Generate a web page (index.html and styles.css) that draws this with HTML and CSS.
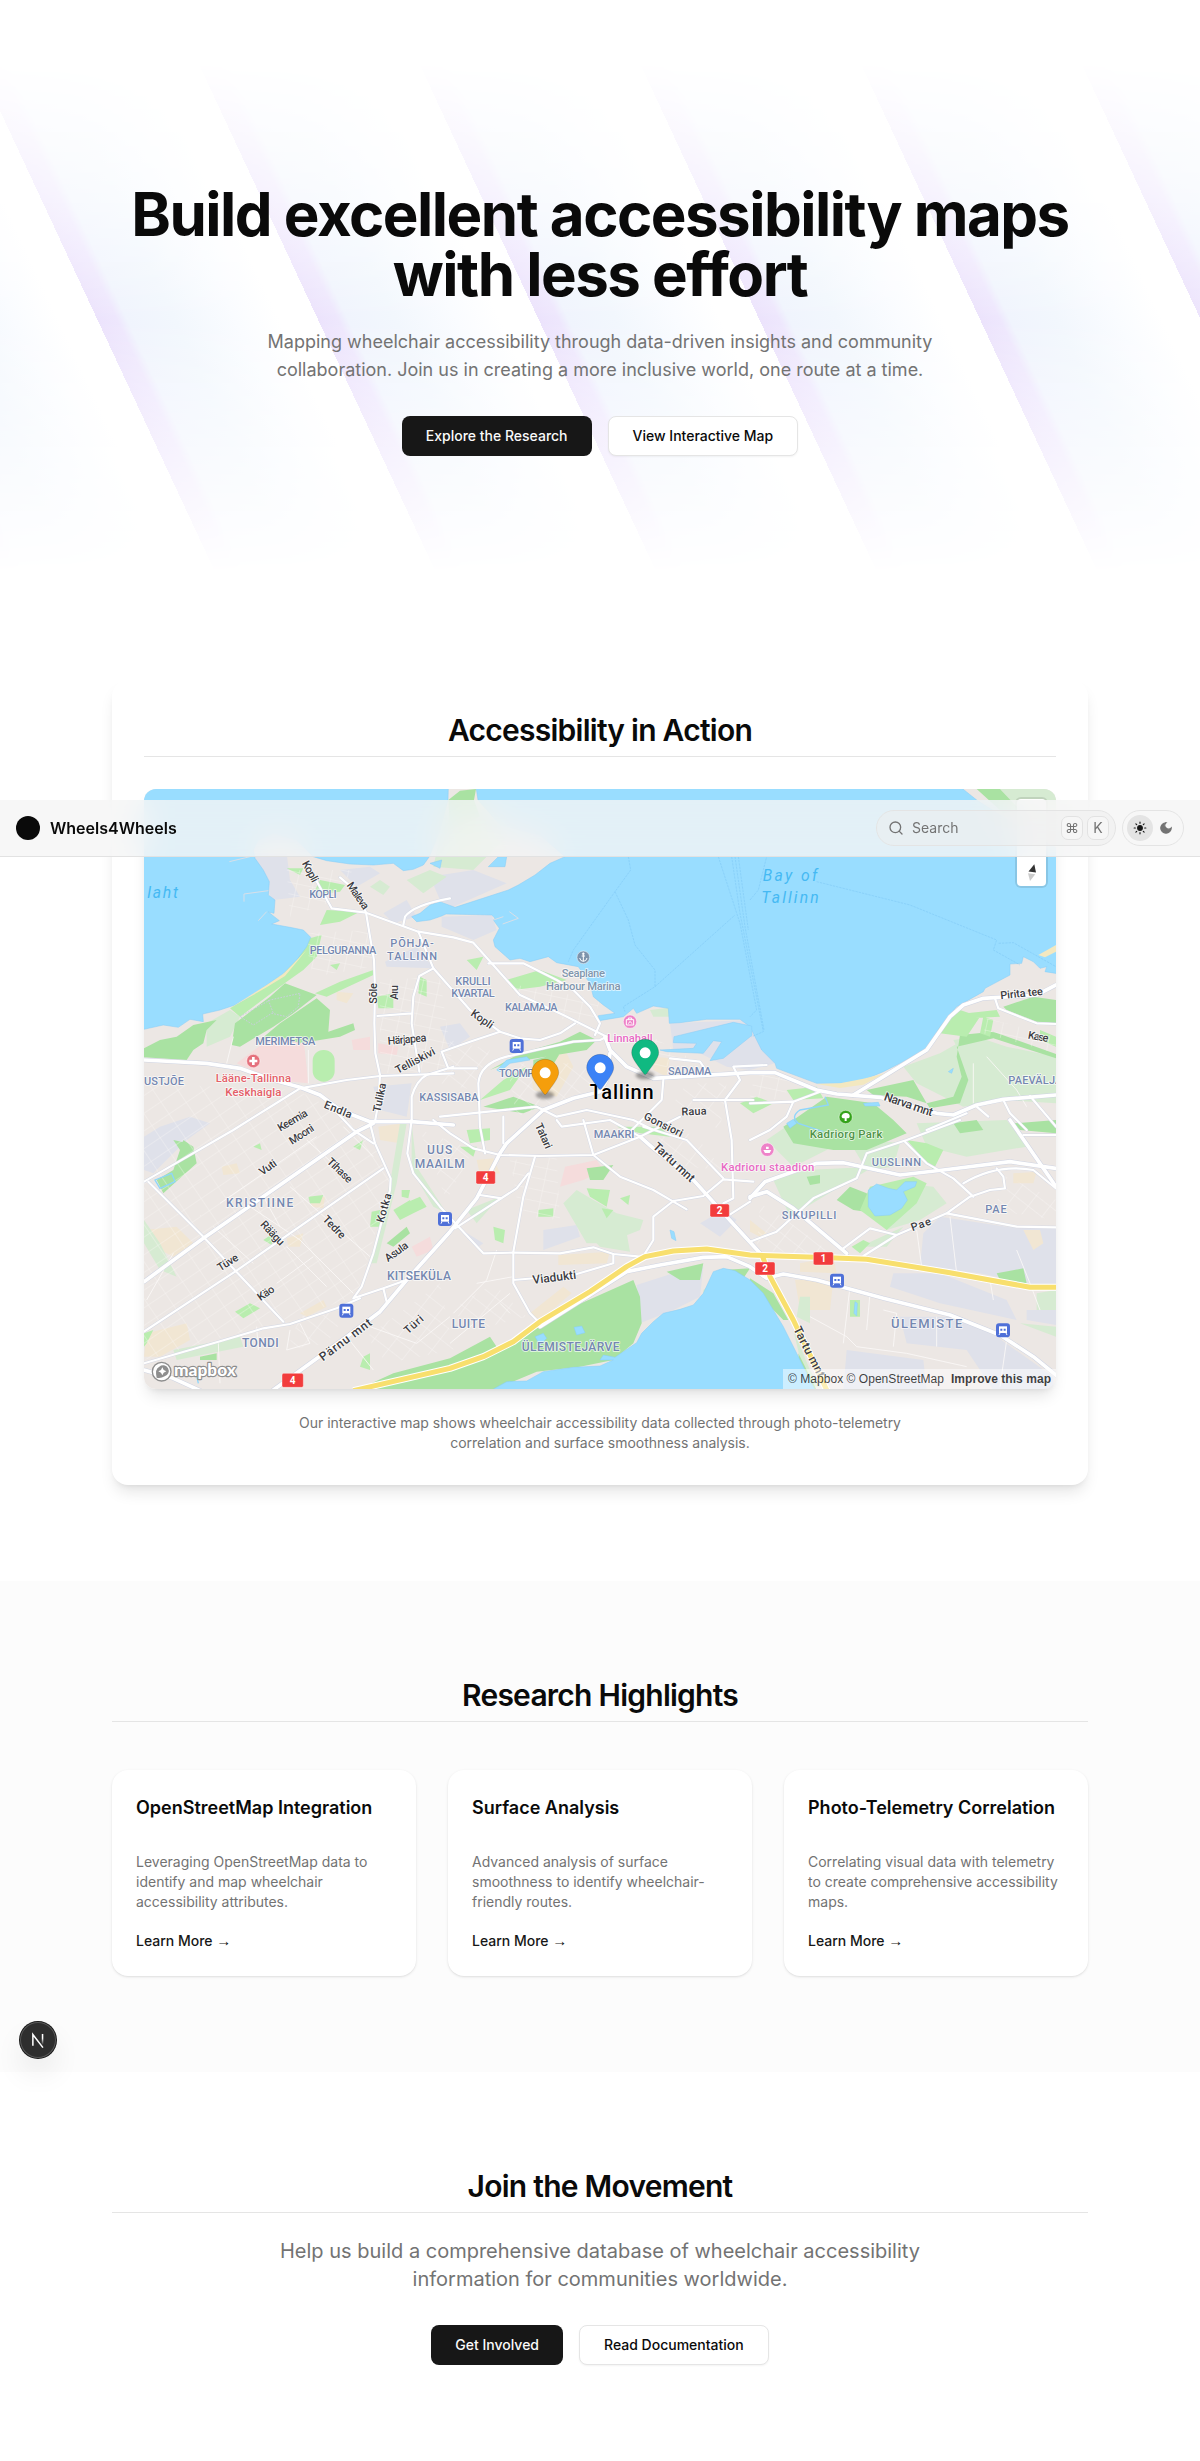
FILE: index.html
```html
<!DOCTYPE html>
<html lang="en">
<head>
<meta charset="utf-8">
<title>Wheels4Wheels</title>
<link rel="stylesheet" href="styles.css">
</head>
<body>
<header class="nav">
  <a class="brand"><span class="brand-dot"></span>Wheels4Wheels</a>
  <div class="nav-tools">
    <div class="search">
      <svg class="search-icon" viewBox="0 0 24 24"><circle cx="11" cy="11" r="8"/><path d="m21 21-4.3-4.3"/></svg>
      <span class="search-label">Search</span>
      <kbd>⌘</kbd><kbd>K</kbd>
    </div>
    <div class="theme">
      <span class="theme-opt active"><svg viewBox="0 0 24 24"><circle cx="12" cy="12" r="4"/><path d="M12 2v2M12 20v2M4.93 4.93l1.41 1.41M17.66 17.66l1.41 1.41M2 12h2M20 12h2M6.34 17.66l-1.41 1.41M19.07 4.93l-1.41 1.41"/></svg></span>
      <span class="theme-opt"><svg viewBox="0 0 24 24"><path d="M12 3a6 6 0 0 0 9 9 9 9 0 1 1-9-9Z"/></svg></span>
    </div>
  </div>
</header>

<main>
<section class="hero">
  <h1>Build excellent accessibility maps<br>with less effort</h1>
  <p class="hero-lead">Mapping wheelchair accessibility through data-driven insights and community collaboration. Join us in creating a more inclusive world, one route at a time.</p>
  <div class="actions">
    <a class="btn btn-dark">Explore the Research</a>
    <a class="btn btn-light">View Interactive Map</a>
  </div>
</section>

<section class="section">
  <div class="map-card">
    <h2>Accessibility in Action</h2>
    <div class="map">
      <svg class="map-art" viewBox="12 -183 2736 1800">
        <defs>
          <pattern id="gridA" width="62" height="44" patternUnits="userSpaceOnUse" patternTransform="rotate(-34)"><path d="M0 0H62M0 0V44"/></pattern>
          <pattern id="gridB" width="48" height="34" patternUnits="userSpaceOnUse" patternTransform="rotate(12)"><path d="M0 0H48M0 0V34"/></pattern>
          <pattern id="gridC" width="52" height="40" patternUnits="userSpaceOnUse" patternTransform="rotate(38)"><path d="M0 0H52M0 0V40"/></pattern>
          <filter id="soft" x="-50%" y="-50%" width="200%" height="200%"><feGaussianBlur stdDeviation="5"/></filter>
          <g id="streets">
            <path d="M500 40 575 175 678 188 690 260 702 330 705 420 703 520 706 610 720 675 715 760 705 815"/>
            <path d="M600 82 650 125 678 188 835 245 940 262 1000 278 1140 435 1270 495 1400 560"/>
            <path d="M930 145Q820 165 795 200L790 225M835 245 880 355 990 480 1080 545 1140 565 1200 570 1260 550 1305 520"/>
            <path d="M880 355 838 378 820 440 815 520 838 665M712 498 815 490"/>
            <path d="M480 715 620 690 720 678 940 670M480 715 400 765 280 840 12 995M560 755 640 840 700 880"/>
            <path d="M815 815 815 740Q830 690 860 675L940 650"/>
            <path d="M25 995 190 1160 430 1415M12 1445 285 1265 730 955"/>
            <path d="M690 820 705 880 752 985 750 1020 700 1210 665 1310 640 1345 730 1315 800 1290M730 1315 740 1355"/>
            <path d="M815 810 802 910 820 970 900 1070 960 1135 1030 1210 1120 1208 1260 1210 1360 1192 1420 1212 1500 1220"/>
            <path d="M12 1540 235 1475 370 1435 450 1422 590 1375 660 1345"/>
            <path d="M880 810 930 850 1000 895 1080 915 1200 918 1360 915 1500 860 1620 800"/>
            <path d="M1045 340 1150 340 1250 390 1300 420 1350 470 1380 520 1365 555"/>
            <path d="M1035 910 1020 830 1015 700Q1020 640 1100 620L1300 575 1380 570 1400 560"/>
            <path d="M905 605 990 575 1080 545M905 605 925 655 1010 655M900 800 1190 770 1250 800 1340 780 1480 810 1540 840"/>
            <path d="M1570 690 1565 750 1475 840M1660 750 1840 750M1755 750 1800 690 1780 650 1880 645M1590 625 1680 635 1700 665M1755 750 1775 870 1780 1045 1750 1060"/>
            <path d="M1185 920 1150 1040 1120 1205 1120 1300 1170 1390 1190 1410M1120 1290 1300 1275 1420 1240 1420 1212"/>
            <path d="M1360 915 1440 980 1540 1020 1600 1055 1640 1078M1600 1053 1690 1038 1750 988 1840 995M1600 1053 1540 1100 1540 1170 1515 1210"/>
            <path d="M945 1135 1130 1015 1165 970M1020 1035 1085 1045M1410 810 1500 860M1330 810 1360 915M1250 810 1265 830 1410 810M1090 800 1090 880M1510 830 1640 870 1750 985M1760 1100 1830 1055"/>
            <path d="M1830 1175 1910 1145 2020 1045 2150 985 2180 910 2300 870 2460 810"/>
            <path d="M2110 1195 2190 1135 2270 1155M2170 1218 2270 1155 2420 1090 2490 1040 2550 1020 2595 1015 2590 980 2570 955M2420 1090 2630 1130 2748 1132M2295 875 2360 940 2440 985 2500 1040M2470 1000Q2570 940 2680 960L2748 1015M2650 855H2748"/>
            <path d="M2565 445 2575 475 2690 520 2748 522M2590 750 2610 790 2660 840M2670 738 2748 830M2510 770 2545 800M1830 760 1960 755 2040 725M1960 755 1940 800 1890 840 1830 870M2360 840 2480 790"/>
          </g>
          <g id="arterials">
            <path d="M12 630 200 640 300 655 400 690 480 712 540 735 600 780 690 815 815 815 940 825"/>
            <path d="M12 1295 190 1165 650 845 700 820"/>
            <path d="M400 1620 620 1460 720 1385 800 1290 930 1145 1010 1045 1080 910 1100 880 1210 780 1300 745 1380 725 1400 690 1410 610"/>
            <path d="M1395 560 1410 600 1460 650 1540 685 1830 668 1905 668 2030 720 2090 732 2220 742 2390 790 2440 795 2510 765 2590 748 2748 735"/>
            <path d="M2140 735 2230 680 2360 600 2430 500 2470 465 2530 445 2610 440 2690 435 2748 405"/>
            <path d="M1500 860 1540 895 1660 990 1760 1100 1870 1220"/>
            <path d="M1830 1045 1875 995 2030 940 2110 938 2280 975 2410 960 2610 935 2748 955"/>
            <path d="M1830 1040 1880 1025 1960 1075 2120 1210M2610 810 2748 1010"/>
            <path d="M1200 1430 1460 1265 1560 1245 1690 1222 1760 1220 1830 1250 1880 1285 1930 1272 2030 1290 2230 1345 2430 1395 2580 1455 2680 1520 2760 1585"/>
            <path d="M12 1560 100 1585 220 1640"/>
          </g>
        </defs>
        <rect class="land" x="0" y="-190" width="2760" height="1820"/>

        <g class="industrial">
          <path d="M340 10H440L450 90 480 140 400 150 385 130Z M600 60 690 50 720 70 650 110Z M730 190 800 150 830 200 760 220Z M735 335 830 290 880 355 740 350Z M700 710 815 700 800 800 720 780Z M60 830 150 800 210 820 140 870 40 970 12 960V860Z"/>
          <path d="M870 80 1000 60 1100 100 940 170 900 150Z M905 200 1055 195 1070 240 1000 270 905 230Z M900 530 960 520 990 560 930 600Z M1590 520 1830 510 1870 600 1905 640 1830 660 1760 650 1680 610 1600 600Z"/>
          <path d="M1210 1140 1310 1125 1320 1160 1210 1200Z M1490 1305 1600 1270 1690 1250 1680 1340 1600 1380 1500 1420Z M1680 1120 1750 1080 1790 1110 1740 1160Z M950 1130 1030 1180 1010 1195Z"/>
          <path d="M2350 1150 2400 1100 2630 1135 2748 1135V1320L2520 1270 2340 1250Z M2260 1270 2400 1270 2600 1350 2630 1410 2400 1360 2250 1310Z M2280 1400 2450 1400 2570 1460 2740 1580V1620H2560L2480 1500 2300 1480Z M2120 1500 2350 1530 2360 1620H2110Z M2660 1380H2748V1425L2660 1410Z"/>
        </g>
        <g class="block-sand">
          <path d="M590 425 640 430 620 460 590 450Z M245 950 290 940 300 970 250 975Z M12 1140 110 1130 160 1180 100 1220 60 1200Z M440 1165 490 1150 480 1190 445 1190Z M510 1040 555 1040 550 1075 515 1070Z M20 1450 140 1420 150 1470 60 1520 12 1520Z M480 1390 550 1350 560 1370 500 1400Z M715 830 790 820 780 880 720 870Z"/>
          <path d="M1170 650 1270 590 1300 650 1250 740 1180 720Z M1170 1390 1270 1310 1295 1330 1200 1410Z M1010 930 1060 925 1080 970 1020 975Z M1255 1215 1410 1205 1400 1240 1255 1245Z M1540 620 1590 625 1580 680 1540 660Z M2440 370 2480 365 2470 395 2435 390Z"/>
          <path d="M1980 1240 2080 1220 2090 1270 1980 1265Z M1965 1290 2080 1290 2070 1380 1980 1380Z M2620 970 2690 965 2680 1000 2620 1000Z M2650 1140 2700 1140 2710 1180 2680 1200Z M1830 1110 1880 1150 1860 1160 1830 1145Z"/>
        </g>
        <g class="hospital">
          <path d="M290 640 370 580 460 545 490 560 505 700 400 690Z M635 570 690 560 690 600 640 600Z M715 580 775 590 770 615 715 610Z M1275 950 1370 930 1390 960 1330 990 1260 1010Z M815 1190 870 1160 880 1200 830 1220Z"/>
        </g>

        <g class="green-pale">
          <path d="M930 -100 1060 -90 1100 -40 1000 60 880 50 900 -40Z M2580 -183H2748V-110L2640 -120Z"/>
          <path d="M200 520 270 480 300 500 270 560 200 590Z M800 90 870 60 920 80 850 130Z M690 110 720 90 750 110 730 135Z M12 1110 60 1180 110 1280 60 1260 12 1180Z M100 1500 300 1460 310 1490 110 1530Z M800 820 770 1000 710 1240 690 1240 750 1000 780 820Z M815 820 830 950 920 1090 880 1070 815 960Z"/>
          <path d="M1270 1060 1310 1020 1360 1050 1430 1090 1510 1110 1500 1140 1400 1180 1340 1180Z M1360 1170 1460 1150 1470 1205 1380 1190Z M980 1080 1080 1040 1010 1120Z M2290 650 2400 610 2470 570 2748 620V760L2600 750 2470 770 2330 700Z M2440 570 2510 560 2600 590 2748 620V740L2630 720 2500 690Z"/>
          <path d="M1900 990 2000 960 2200 950 2150 980 1950 1100Z M2330 820 2600 810 2660 890 2480 920 2360 890Z M2120 860 2280 880 2260 950 2180 960Z M2160 1190 2290 1130 2240 1190Z M2180 1060 2280 1000 2380 1010 2420 1060 2340 1110 2240 1140Z M2690 1330 2748 1320V1380H2690Z M2640 1420 2748 1430V1460Z M1880 870 2040 760 2200 810 2120 870 1960 950Z"/>
          <path d="M1530 480 1630 468 1685 475 1688 500 1540 500Z M1690 1320 1760 1270 1770 1340 1690 1350Z M1980 1340 2010 1340 2010 1420 1970 1400Z M1960 1440 2010 1560 2040 1610 2000 1610Z"/>
        </g>
        <g class="green-dark">
          <path d="M925 -150 960 -178 1008 -183 1002 -150 1020 -100 930 -60Z M2510 -183H2580L2640 -120 2590 -110Z"/>
          <path d="M435 400 530 435 460 490 400 530 300 590 275 585 285 520 390 440Z M530 445 570 480 565 545 640 520 645 540 600 560 480 580 420 560 360 570 420 520Z M12 595 60 570 110 560 160 525 230 510 200 540 190 580 160 600 140 630 12 622Z"/>
          <path d="M130 870 160 890 170 940 70 1030 50 990 100 960Z M100 870 145 880 120 900Z M740 1180 800 1130 810 1150 760 1190Z M180 1520 230 1510 230 1530 180 1530Z M650 1620 760 1570 930 1525 1050 1460 1070 1490 940 1560 1050 1515 1200 1420 1300 1370 1480 1290 1500 1340 1505 1420 1480 1480 1420 1530 1320 1550 1190 1565 1060 1620Z"/>
          <path d="M1260 575 1320 545 1370 570 1340 600 1100 640 1050 660 1140 610Z M1180 630 1260 610 1230 660 1180 660Z M1030 770 1120 740 1200 770 1150 790Z M1340 955 1420 945 1390 990 1350 990Z M1580 1265 1690 1240 1680 1290 1620 1290Z M1750 1260 1830 1255 1800 1300Z"/>
          <path d="M2590 470 2680 440 2748 450V520L2690 515 2600 480Z M2450 590 2560 565 2748 625V612L2560 545 2460 555 2450 620 2465 680 2440 740 2360 760 2370 775 2460 760 2485 690Z M2180 720 2320 690 2360 760 2300 740 2200 735Z M1960 810 2060 740 2200 760 2260 810 2300 850 2180 900 2080 900 1960 880 1930 830Z M2090 1050 2130 1010 2180 1030 2210 1090 2140 1080Z M2570 1270 2650 1255 2660 1300 2580 1290Z M2000 980 2040 975 2040 1000 2010 1005Z M1830 1285 1900 1330 1945 1410 1930 1410 1880 1360 1830 1300Z M1975 1510 2020 1600 2030 1620 2000 1620 1980 1560Z M2440 820 2510 810 2530 840 2460 850Z M2620 820 2748 810V850L2640 840Z"/>
        </g>
        <g class="green">
          <path d="M510 265 545 255 530 320 490 360 440 395 300 500 270 475 430 372Z M540 90 615 105 600 125 550 130 525 120Z M560 180 660 185 600 215 540 225Z M525 430 600 395 700 360 700 375 560 440Z M710 440 760 430 760 475 715 475Z M840 380 860 390 860 440 835 430Z M440 55 490 55 480 75Z M570 345 600 340 590 360Z"/>
          <rect x="518" y="600" width="66" height="95" rx="32"/>
          <path d="M1100 390 1200 360 1280 390 1200 410 1120 420Z M980 330 1030 320 1010 360Z M1020 750 1090 690 1160 650 1110 720Z M340 890 360 880 365 900Z M505 1040 550 1035 540 1060 510 1060Z M285 1385 330 1360 360 1375 310 1405Z M695 1085 720 1080 720 1130 690 1130Z M760 1080 810 1050 820 1090 780 1110Z M805 1055 840 1040 860 1070 820 1090Z M785 1020 810 1020 805 1045 785 1040Z M370 1170 400 1150 395 1185Z M640 890 670 870 660 900Z M12 1450 40 1440 20 1480 12 1490Z"/>
          <path d="M980 840 1050 835 1050 870 990 880Z M1060 1130 1095 1140 1090 1180 1065 1170Z M1195 1080 1240 1075 1240 1100 1195 1100Z M1340 1015 1410 1020 1400 1070 1350 1040Z M1440 1045 1470 1035 1465 1065Z M1385 1075 1420 1080 1400 1105Z M1430 830 1500 850 1590 860 1560 830Z M960 890 1010 890 1000 920Z M2480 490 2570 480 2580 500 2490 505Z M2350 520 2460 480 2520 500 2480 560 2400 550Z M2380 960 2300 870 2360 880 2410 900Z M2530 500 2560 510 2550 560 2520 550Z M2700 540 2748 560V590L2700 570Z M1800 760 1850 740 1900 760 1840 790Z M1940 720 2030 710 2050 745 1960 750Z M2320 980 2360 1000 2330 1060 2240 1140 2160 1080 2190 1010Z M2135 1190 2170 1170 2190 1180 2160 1210Z M2130 1350 2160 1350 2160 1400 2130 1400Z M670 1520 690 1510 690 1560 660 1550Z"/>
        </g>

        <g class="hatch">
          <path fill="url(#gridA)" d="M12 700 470 720 680 830 710 900 750 1000 650 1340 430 1410 12 1530Z"/>
          <path fill="url(#gridB)" d="M490 250 690 240 700 350 520 380Z M720 390 900 380 940 660 720 670Z M440 60 640 60 560 160 450 200Z M1100 400 1380 450 1350 540 1150 460Z M1110 930 1250 920 1260 1110 1140 1100Z M1500 540 1660 630 1540 660Z M2540 505 2748 560V610L2530 550Z M1850 650 1960 700 1920 750 1830 740Z"/>
          <path fill="url(#gridC)" d="M840 840 1000 900 920 1050Z M1100 640 1400 640 1400 700 1130 800Z M1860 1060 1940 1110 2090 1220 1850 1200Z M1500 870 1660 850 1750 960 1640 950Z M930 570 1050 600 1000 720 900 700Z M480 1400 640 1360 560 1480 440 1500Z M2600 980 2748 1050V1110L2560 1080Z M1060 1300 1160 1400 1010 1440 930 1380Z M680 1460 900 1300 940 1500 740 1540Z M1640 700 1760 700 1740 840 1600 760Z"/>
        </g>
        <g class="lanes">
          <path d="M240 1060 530 860M330 1070 480 1170 640 1330M220 1130 340 1240M100 1210 20 1350M370 1040 420 1130M610 830 700 920M450 1010 690 1220M500 870 600 960M410 1300 520 1220M440 1190 560 1310M350 1430 355 1500M235 1480 240 1600M480 1420 510 1480 440 1500 450 1440M620 1460 700 1560M690 1430 830 1480 930 1400M1010 1300 1120 1280M930 1480 1110 1330M1080 1360 1110 1390M940 1390 1040 1290 1070 1200M2010 1400 2120 1460 2150 1490 2300 1510 2480 1550M2130 1310 2110 1480M2190 1330 2180 1440M2230 1380 2270 1390 2260 1490M2390 1400V1490M2600 1470 2580 1610M2430 1100 2450 1270M2630 1200 2670 1300 2700 1380M2330 1140 2345 1250M2550 1290 2560 1350M2500 640V760M2540 620 2630 720 2660 770M280 560 260 640M505 600V700"/>
        </g>

        <g class="water">
          <path d="M-20 545 70 525 115 532 150 508 190 515 188 492 240 480 285 465 330 440 380 405 430 370 470 330 500 290 512 262 490 240 450 232 395 222 418 212 385 186 402 190 405 150 385 135 388 95 370 60 345 25 340 0 355 -30 400 -50 470 -30 520 20 560 32 630 42 700 45 760 40 790 62 820 58 850 45 868 20 900 -60 924 -150 925 -190H-20Z"/>
          <path d="M1008 -190 1014 -150 1080 -75 1200 -45 1275 20 1230 40 1185 75 1135 105 1105 120 945 172 900 155 870 165 840 190 815 200 830 215 870 210 905 198 918 192 1055 195 1065 205 1060 210 1078 235 1060 270 1065 290 1110 330 1140 325 1170 335 1225 320 1250 338 1315 350 1350 400 1360 440 1390 465 1425 490 1375 497 1378 512 1450 500 1480 475 1490 490 1540 468 1585 475 1588 520 1620 518 1700 508 1800 508 1830 530 1865 600 1905 640 1910 655 2030 700 2100 700 2170 690 2230 665 2280 640 2360 595 2400 530 2450 470 2530 425 2535 415 2610 375 2610 342 2645 340 2650 320 2680 335 2700 355 2720 350 2715 365 2760 372V0L2650 -60 2510 -150 2460 -190Z"/>
          <path d="M1602 560 1780 517 1835 528 1836 556 1750 625 1710 632 1745 575 1720 572 1690 610 1580 605 1560 600 1660 595 1670 580 1600 578Z"/>
          <path d="M1055 1620 1100 1595 1160 1593 1210 1565 1300 1552 1380 1548 1420 1530 1380 1530 1390 1515 1425 1522 1490 1478 1505 1450 1540 1415 1570 1390 1620 1378 1660 1365 1690 1330 1720 1265 1750 1255 1785 1262 1830 1290 1870 1330 1900 1380 1930 1430 1970 1510 2025 1620Z"/>
          <path d="M2185 1020 2210 1002 2245 1015 2270 1020 2295 995 2330 995 2325 1010 2290 1025 2302 1050 2285 1075 2250 1095 2205 1098 2185 1070Z M1185 1460 1210 1450 1220 1465 1200 1485Z M1302 1432 1325 1428 1335 1448 1310 1455Z M1590 1140 1602 1145 1608 1172 1595 1165Z M2425 665 2440 655 2435 670Z M2170 760 2215 757 2220 768 2175 768Z M1940 820 1960 808 1970 820 1950 835Z M2145 1355 2152 1360 2150 1398 2142 1390Z"/>
          <path d="M1075 20H1100L1095 50H1045Z M870 40 905 30 900 55Z M1070 660 1100 630 1160 620 1170 630 1110 640 1080 665Z"/>
        </g>
        <path class="sand" d="M2030 702 2100 714 2170 704 2235 670 2170 686 2100 700Z M2695 315 2748 285V305L2715 322Z M430 372 380 405 285 465 270 475 380 412 435 378 500 300Z"/>
        <path class="stream" d="M2055 740 2065 765 1980 780Q1950 800 1975 820L2050 845M45 990 95 970 105 995 60 1015ZM165 1555 175 1600"/>
        <path class="path-dotted" d="M300 500 390 450 480 430 475 470 440 500 395 490 340 525ZM385 450 400 490"/>
        <path class="pier" d="M268 35 330 20M312 155V132L385 122M355 212 380 185M1060 210 1090 200M1108 185 1135 205 1088 222"/>
        <path class="ferry" d="M1465 20 1472 60 1425 125 1300 300 1285 335M1425 125 1465 210 1485 285 1545 360V410L1450 470 1455 485M1545 410 1785 195M1735 20 1800 220 1850 480 1830 500M1775 20 1800 190 1870 545 1835 560M1785 20 1815 230 1872 540M1795 20 1825 240M2030 95 2310 165 2570 270 2560 300 2640 345M2576 280 2620 278 2748 350M1830 150 1855 120 1880 20"/>

        <g class="street-edge"><use href="#streets"/></g>
        <g class="arterial-edge"><use href="#arterials"/></g>
        <g class="street-fill"><use href="#streets"/></g>
        <g class="arterial-fill"><use href="#arterials"/></g>
        <path class="highway-edge" d="M640 1622 930 1555 1030 1520 1120 1475 1200 1415 1350 1325 1460 1250 1515 1220 1600 1203 1700 1197 1830 1215 2030 1222 2180 1228 2430 1268 2670 1312H2760"/>
        <path class="highway-edge" d="M1868 1220 1890 1280 1960 1410 2065 1630"/>
        <path class="highway" d="M640 1622 930 1555 1030 1520 1120 1475 1200 1415 1350 1325 1460 1250 1515 1220 1600 1203 1700 1197 1830 1215 2030 1222 2180 1228 2430 1268 2670 1312H2760"/>
        <path class="highway" d="M1868 1220 1890 1280 1960 1410 2065 1630"/>

        <g class="label area">
          <text x="549" y="144" textLength="82">KOPLI</text>
          <text x="609" y="311" textLength="200">PELGURANNA</text>
          <text x="816" y="292" textLength="130">PÕHJA-</text>
          <text x="816" y="330" textLength="150">TALLINN</text>
          <text x="436" y="584" textLength="180">MERIMETSA</text>
          <text x="72" y="704" textLength="120">USTJÕE</text>
          <text x="927" y="753" textLength="178">KASSISABA</text>
          <text x="999" y="405" textLength="106">KRULLI</text>
          <text x="999" y="441" textLength="130">KVARTAL</text>
          <text x="1174" y="483" textLength="158">KALAMAJA</text>
          <text x="1148" y="680" textLength="142">TOOMPEA</text>
          <text x="1649" y="675" textLength="130">SADAMA</text>
          <text x="2686" y="703" textLength="162">PAEVÄLJA</text>
          <text class="lg" x="359" y="1072" textLength="202">KRISTIINE</text>
          <text class="lg" x="899" y="911" textLength="76">UUS</text>
          <text class="lg" x="899" y="953" textLength="150">MAAILM</text>
          <text class="lg" x="837" y="1290" textLength="192">KITSEKÜLA</text>
          <text class="lg" x="361" y="1492" textLength="110">TONDI</text>
          <text x="1422" y="863" textLength="122">MAAKRI</text>
          <text class="lg" x="985" y="1433" textLength="100">LUITE</text>
          <text class="lg" x="1292" y="1502" textLength="293">ÜLEMISTEJÄRVE</text>
          <text x="2269" y="948" textLength="148">UUSLINN</text>
          <text x="2007" y="1106" textLength="164">SIKUPILLI</text>
          <text x="2568" y="1089" textLength="64">PAE</text>
          <text class="xl" x="2360" y="1435" textLength="214">ÜLEMISTE</text>
        </g>
        <g class="label road">
          <text transform="translate(508 66) rotate(62)" y="8" textLength="68">Kopli</text>
          <text transform="translate(653 138) rotate(55)" y="10" textLength="92">Maleva</text>
          <text transform="translate(701 430) rotate(-90)" y="11" textLength="62">Sõle</text>
          <text transform="translate(764 427) rotate(-90)" y="10" textLength="44">Aru</text>
          <text transform="translate(801 569) rotate(-5)" y="10" textLength="116">Härjapea</text>
          <text transform="translate(826 633) rotate(-28)" y="10" textLength="130">Telliskivi</text>
          <text transform="translate(720 743) rotate(-78)" y="10" textLength="88">Tulika</text>
          <text transform="translate(594 780) rotate(22)" y="10" textLength="88">Endla</text>
          <text transform="translate(458 812) rotate(-30)" y="10" textLength="98">Keemia</text>
          <text transform="translate(485 854) rotate(-33)" y="10" textLength="82">Mooni</text>
          <text transform="translate(384 953) rotate(-35)" y="10" textLength="56">Vuti</text>
          <text transform="translate(599 962) rotate(44)" y="10" textLength="92">Tihase</text>
          <text transform="translate(397 1150) rotate(46)" y="10" textLength="88">Räägu</text>
          <text transform="translate(582 1132) rotate(46)" y="10" textLength="82">Tedre</text>
          <text transform="translate(733 1074) rotate(-74)" y="10" textLength="90">Kotka</text>
          <text transform="translate(770 1206) rotate(-36)" y="10" textLength="78">Asula</text>
          <text transform="translate(264 1238) rotate(-32)" y="10" textLength="68">Tüve</text>
          <text transform="translate(378 1330) rotate(-35)" y="10" textLength="54">Käo</text>
          <text transform="translate(822 1424) rotate(-42)" y="10" textLength="66">Türi</text>
          <text class="big" transform="translate(617 1470) rotate(-37)" y="11" textLength="186">Pärnu mnt</text>
          <text transform="translate(1026 508) rotate(35)" y="10" textLength="74">Kopli</text>
          <text transform="translate(1210 858) rotate(66)" y="10" textLength="80">Tatari</text>
          <text transform="translate(1570 825) rotate(26)" y="10" textLength="126">Gonsiori</text>
          <text transform="translate(1662 785) rotate(-2)" y="10" textLength="76">Raua</text>
          <text class="big" transform="translate(1601 938) rotate(43)" y="10" textLength="156">Tartu mnt</text>
          <text class="big" transform="translate(1243 1283) rotate(-7)" y="11" textLength="132">Viadukti</text>
          <text class="big" transform="translate(2305 765) rotate(19)" y="10" textLength="152">Narva mnt</text>
          <text transform="translate(2645 431) rotate(-6)" y="10" textLength="128">Pirita tee</text>
          <text transform="translate(2695 561) rotate(10)" y="10" textLength="62">Kase</text>
          <text transform="translate(2343 1124) rotate(-20)" y="10" textLength="62">Pae</text>
          <text class="big" transform="translate(2006 1506) rotate(63)" y="10" textLength="166">Tartu mnt</text>
        </g>
        <g class="label bay">
          <text x="68" y="144" textLength="92">laht</text>
          <text x="1950" y="94" textLength="164">Bay of</text>
          <text x="1950" y="158" textLength="172">Tallinn</text>
        </g>
        <g class="label poi">
          <text class="red" x="340" y="696" textLength="226">Lääne-Tallinna</text>
          <text class="red" x="340" y="737" textLength="168">Keskhaigla</text>
          <text class="slate" x="1330" y="381" textLength="130">Seaplane</text>
          <text class="slate" x="1330" y="420" textLength="224">Harbour Marina</text>
          <text class="pink" x="1470" y="575" textLength="136">Linnahall</text>
          <text class="pink" x="1883" y="964" textLength="280">Kadrioru staadion</text>
          <text class="forest" x="2118" y="864" textLength="218">Kadriorg Park</text>
        </g>
        <g class="icons">
          <circle cx="340" cy="633" r="20" fill="#e5707c"/><path d="M340 621V645M328 633H352" stroke="#fff" stroke-width="8"/>
          <circle cx="1330" cy="322" r="19" fill="#7d93ac"/><path d="M1330 313V334M1319 324Q1321 334 1330 334T1341 324M1325 318H1335" fill="none" stroke="#fff" stroke-width="3"/><circle cx="1330" cy="311" r="3" fill="#fff"/>
          <circle cx="1470" cy="515" r="20" fill="#ee82c8"/><path d="M1459 509H1481V525H1459ZM1465 509V504H1475V509M1465 521L1470 514 1476 521" fill="none" stroke="#fff" stroke-width="3"/>
          <circle cx="1882" cy="899" r="20" fill="#ee82c8"/><path d="M1870 900H1894L1889 909H1875ZM1878 897V890H1886V897Z" fill="#fff"/>
          <circle cx="2117" cy="801" r="20" fill="#35a31b"/><path d="M2114 813V805Q2104 806 2105 797 2108 788 2117 789 2127 788 2129 797 2130 806 2120 805V813Z" fill="#fff"/>
        </g>
        <g class="stations">
          <g id="station" transform="translate(1130 588)"><rect x="-21" y="-21" width="42" height="42" rx="9"/><path d="M-12 -12H12V8H-12Z" class="car"/><path d="M-8 -5H-2V1H-8ZM2 -5H8V1H2Z"/><path d="M-9 8-12 14M9 8 12 14" class="rail"/></g>
          <use href="#station" x="-511" y="794"/>
          <use href="#station" x="-215" y="519"/>
          <use href="#station" x="961" y="704"/>
          <use href="#station" x="1459" y="853"/>
        </g>
        <g class="shields">
          <rect x="426" y="1570" width="64" height="42" rx="5"/><text x="458" y="1601">4</text>
          <rect x="1008" y="963" width="58" height="39" rx="5"/><text x="1037" y="993">4</text>
          <rect x="1710" y="1062" width="58" height="39" rx="5"/><text x="1739" y="1092">2</text>
          <rect x="1845" y="1236" width="60" height="39" rx="5"/><text x="1875" y="1266">2</text>
          <rect x="2020" y="1206" width="60" height="39" rx="5"/><text x="2050" y="1236">1</text>
        </g>
        <text class="city" x="1349" y="746" textLength="192">Tallinn</text>
        <g class="pin">
          <ellipse cx="1215" cy="735" rx="28" ry="12" filter="url(#soft)"/>
          <ellipse cx="1515" cy="676" rx="28" ry="12" filter="url(#soft)"/>
          <g transform="translate(1175 628) scale(3)"><path fill="#f59e0b" stroke="#0003" stroke-width=".8" d="M27 13.5C27 19.07 20.25 27 14.75 34.5 14.02 35.5 12.98 35.5 12.25 34.5 6.75 27 0 19.22 0 13.5 0 6.04 6.04 0 13.5 0 20.96 0 27 6.04 27 13.5Z"/><circle cx="13.5" cy="13.5" r="5.5"/></g>
          <g transform="translate(1340 613) scale(3)"><path fill="#3b82f6" stroke="#0003" stroke-width=".8" d="M27 13.5C27 19.07 20.25 27 14.75 34.5 14.02 35.5 12.98 35.5 12.25 34.5 6.75 27 0 19.22 0 13.5 0 6.04 6.04 0 13.5 0 20.96 0 27 6.04 27 13.5Z"/><circle cx="13.5" cy="13.5" r="5.5"/></g>
          <g transform="translate(1475 568) scale(3)"><path fill="#10b981" stroke="#0003" stroke-width=".8" d="M27 13.5C27 19.07 20.25 27 14.75 34.5 14.02 35.5 12.98 35.5 12.25 34.5 6.75 27 0 19.22 0 13.5 0 6.04 6.04 0 13.5 0 20.96 0 27 6.04 27 13.5Z"/><circle cx="13.5" cy="13.5" r="5.5"/></g>
        </g>
        <g class="wordmark">
          <circle cx="65" cy="1565" r="28"/><path d="M50 1583Q44 1556 58 1550A17 17 0 1 1 74 1579Q62 1586 50 1583Z" class="bubble"/><path d="M67 1552 71 1560 79 1564 71 1568 67 1576 63 1568 55 1564 63 1560Z" fill="#fff"/>
          <text x="102" y="1578" textLength="186">mapbox</text>
        </g>
      </svg>
      <div class="map-controls">
        <svg viewBox="0 0 29 29"><path fill="#333" d="M11.5 14.5 17.3 7.3 19 15.6Z"/><path fill="#ccc" d="M11 16.3 18.3 17.2 13 24Z"/></svg>
      </div>
      <div class="attribution">© Mapbox © OpenStreetMap <strong>Improve this map</strong></div>
    </div>
    <p class="caption">Our interactive map shows wheelchair accessibility data collected through photo-telemetry correlation and surface smoothness analysis.</p>
  </div>
</section>

<section class="section tinted">
  <h2>Research Highlights</h2>
  <div class="cards">
    <article class="card"><h3>OpenStreetMap Integration</h3><p>Leveraging OpenStreetMap data to identify and map wheelchair accessibility attributes.</p><a>Learn More <span class="arrow">→</span></a></article>
    <article class="card"><h3>Surface Analysis</h3><p>Advanced analysis of surface smoothness to identify wheelchair-friendly routes.</p><a>Learn More <span class="arrow">→</span></a></article>
    <article class="card"><h3>Photo-Telemetry Correlation</h3><p>Correlating visual data with telemetry to create comprehensive accessibility maps.</p><a>Learn More <span class="arrow">→</span></a></article>
  </div>
</section>

<section class="section join">
  <h2>Join the Movement</h2>
  <p class="join-lead">Help us build a comprehensive database of wheelchair accessibility information for communities worldwide.</p>
  <div class="actions">
    <a class="btn btn-dark">Get Involved</a>
    <a class="btn btn-light">Read Documentation</a>
  </div>
</section>
</main>

<div class="dev-badge"><svg viewBox="0 0 40 40"><defs><linearGradient id="nfade" x1="0" y1="0" x2="0" y2="1"><stop offset=".4" stop-color="#fff"/><stop offset="1" stop-color="#fff" stop-opacity="0"/></linearGradient></defs><path d="M14.3 26.5V13.8L25.5 28.5" fill="none" stroke="#fff" stroke-width="1.7"/><rect x="24.2" y="13.3" width="1.7" height="12" fill="url(#nfade)"/></svg></div>
</body>
</html>
```
FILE: styles.css
```css
* { box-sizing: border-box; }

body {
  margin: 0;
  position: relative;
  background: #fff;
  color: #0a0a0a;
  font-family: Inter, "Liberation Sans", sans-serif;
  font-size: 14px;
  line-height: 20px;
  -webkit-font-smoothing: antialiased;
}

h1, h2, h3, p { margin: 0; }

.nav {
  position: absolute;
  top: 800px;
  left: 0;
  right: 0;
  z-index: 10;
  height: 57px;
  padding: 0 16px;
  display: flex;
  align-items: center;
  justify-content: space-between;
  background: rgba(245, 245, 245, .8);
  backdrop-filter: blur(16px);
  border-bottom: 1px solid #e2e2e2;
}
.brand { display: flex; align-items: center; gap: 10px; font-size: 16px; font-weight: 600; }
.brand-dot { width: 24px; height: 24px; border-radius: 50%; background: #0a0a0a; }
.nav-tools { display: flex; align-items: center; gap: 6px; }
.search {
  width: 240px;
  height: 36px;
  padding: 0 6px 0 11px;
  display: flex;
  align-items: center;
  gap: 4px;
  border: 1px solid #e4e4e4;
  border-radius: 18px;
  background: rgba(237, 237, 237, .5);
  color: #737373;
}
.search-icon { width: 16px; height: 16px; fill: none; stroke: currentColor; stroke-width: 2; stroke-linecap: round; }
.search-label { flex: 1; margin-left: 4px; }
kbd {
  width: 22px;
  height: 24px;
  display: grid;
  place-items: center;
  font: 14px/1 Inter, "DejaVu Sans", sans-serif;
  border: 1px solid #e2e2e2;
  border-radius: 7px;
  background: #f6f6f6;
}
.theme {
  display: flex;
  padding: 4px;
  border: 1px solid #e4e4e4;
  border-radius: 18px;
}
.theme-opt { width: 26px; height: 26px; padding: 6px; border-radius: 50%; color: #737373; }
.theme-opt.active { background: #e4e4e4; color: #171717; }
.theme-opt svg { display: block; width: 14px; height: 14px; fill: currentColor; stroke: currentColor; stroke-width: 2; stroke-linecap: round; }

/* Hero */
.hero {
  position: relative;
  padding: 184px 112px 128px;
  display: flex;
  flex-direction: column;
  align-items: center;
  text-align: center;
}
.hero::before {
  content: "";
  position: absolute;
  inset: 56px 0 0;
  z-index: -1;
  background: repeating-linear-gradient(65deg, #ece3fc 0, #eee7fd 18px, #f0f4fd 27px, #f2f7fd 70px, #fafcff 125px, #fff 165px, #fff 200px);
  -webkit-mask-image: linear-gradient(transparent 1%, rgba(0, 0, 0, .5) 28%, #000 50%, rgba(0, 0, 0, .5) 74%, transparent 98%);
  mask-image: linear-gradient(transparent 1%, rgba(0, 0, 0, .5) 28%, #000 50%, rgba(0, 0, 0, .5) 74%, transparent 98%);
}
h1 { font-size: 60px; line-height: 60px; font-weight: 700; letter-spacing: -.025em; white-space: nowrap; }
.hero-lead { margin-top: 24px; max-width: 672px; font-size: 18px; line-height: 28px; color: #737373; }
.actions { margin-top: 32px; display: flex; justify-content: center; gap: 16px; }
.btn {
  height: 40px;
  padding: 0 24px;
  display: flex;
  align-items: center;
  border-radius: 8px;
  font-weight: 500;
}
.btn-dark { background: #171717; color: #fafafa; }
.btn-light { background: #fff; border: 1px solid #e5e5e5; box-shadow: 0 1px 2px rgba(0, 0, 0, .05); }

/* Sections */
.section { padding: 96px 112px; }
.tinted { background: #fcfcfc; }
h2 {
  padding-bottom: 8px;
  border-bottom: 1px solid #e5e5e5;
  font-size: 30px;
  line-height: 36px;
  font-weight: 600;
  letter-spacing: -.025em;
  text-align: center;
}

/* Map card */
.map-card {
  padding: 32px;
  border-radius: 16px;
  background: #fff;
  box-shadow: 0 10px 15px -3px rgba(0, 0, 0, .1), 0 4px 6px -4px rgba(0, 0, 0, .1);
}
.map {
  position: relative;
  height: 600px;
  margin-top: 32px;
  border-radius: 12px;
  overflow: hidden;
  box-shadow: 0 10px 15px -3px rgba(0, 0, 0, .1), 0 4px 6px -4px rgba(0, 0, 0, .1);
}
.map-art { display: block; width: 100%; height: 100%; }
.caption { width: 672px; margin: 24px auto 0; padding: 0 32px; text-align: center; color: #737373; }
.map-controls {
  position: absolute;
  top: 10px;
  right: 10px;
  width: 29px;
  height: 87px;
  display: flex;
  align-items: flex-end;
  border-radius: 4px;
  background: #fff;
  box-shadow: 0 0 0 2px rgba(0, 0, 0, .1);
}
.map-controls svg { width: 29px; height: 29px; }
.attribution {
  position: absolute;
  right: 0;
  bottom: 0;
  width: 273px;
  height: 20px;
  padding: 0 5px;
  background: rgba(255, 255, 255, .5);
  color: rgba(0, 0, 0, .75);
  font: 12px/20px "Liberation Sans", Arial, sans-serif;
  letter-spacing: .04px;
  white-space: nowrap;
  display: flex;
  justify-content: space-between;
}

/* Map drawing */
.land { fill: #ece7e4; }
.industrial { fill: #dfe1ea; }
.block-sand { fill: #f1e6d3; }
.hospital { fill: #f5dcdc; }
.green-pale { fill: #d6ebd2; }
.green-dark { fill: #a9e2a2; }
.green { fill: #b9edaf; }
.water { fill: #99ddff; stroke: #86cdf6; stroke-width: 1.5; }
.sand { fill: #f3e8c0; }
.stream { fill: none; stroke: #8ed5fb; stroke-width: 4; }
.pier { fill: none; stroke: #d8dfe8; stroke-width: 3; }
.path-dotted { fill: none; stroke: #c9cfdc; stroke-width: 3; stroke-dasharray: 5 4; }
.ferry { fill: none; stroke: #7cc6f4; stroke-width: 1.6; stroke-dasharray: 7 3; }
pattern path, .lanes { fill: none; stroke: #faf8f7; stroke-width: 2.6; }
.hatch { opacity: .75; }
.street-edge, .street-fill, .arterial-edge, .arterial-fill { fill: none; stroke-linejoin: round; stroke-linecap: round; }
.street-edge { stroke: #d4d8e4; stroke-width: 9; }
.street-fill { stroke: #fff; stroke-width: 6.5; }
.arterial-edge { stroke: #cfd4e2; stroke-width: 14; }
.arterial-fill { stroke: #fff; stroke-width: 11; }
.highway-edge { fill: none; stroke: #fff; stroke-width: 21; stroke-linejoin: round; }
.highway { fill: none; stroke: #f8df6d; stroke-width: 15; stroke-linejoin: round; }

.label, .city, .wordmark text { paint-order: stroke; font-family: Roboto, sans-serif; }
.label { text-anchor: middle; stroke: rgba(255, 255, 255, .75); stroke-width: 5; stroke-linejoin: round; font-size: 34px; font-weight: 500; }
.area { fill: #7487b0; font-weight: 500; font-size: 33px; }
.area .lg { font-size: 36px; }
.area .xl { font-size: 39px; }
.road { fill: #3c3c42; font-weight: 500; font-size: 33px; }
.road .big { font-size: 36px; }
.bay { fill: #45b9f3; stroke: none; font-size: 47px; font-style: italic; font-weight: 400; }
.poi .red { fill: #e45f68; }
.poi .slate { fill: #8195ac; }
.poi .pink { fill: #e86ac4; }
.poi .forest { fill: #4f9247; }
.icons circle { stroke: rgba(255, 255, 255, .7); stroke-width: 2; }
.stations rect, .stations path { fill: #4f70d8; }
.stations .car { fill: #fff; }
.stations .rail { stroke: #fff; stroke-width: 3; }
.shields rect { fill: #f23c3c; stroke: rgba(255, 255, 255, .6); stroke-width: 2; }
.shields text { fill: #fff; font: 700 30px Roboto, sans-serif; text-anchor: middle; }
.city { fill: #000; stroke: rgba(255, 255, 255, .8); stroke-width: 5; font-size: 60px; font-weight: 500; }
.pin ellipse { fill: rgba(0, 0, 0, .35); }
.pin circle { fill: #fff; }
.wordmark circle { fill: rgba(255, 255, 255, .9); stroke: #8e8e8e; stroke-width: 4; }
.wordmark .bubble { fill: #8e8e8e; }
.wordmark text { font-family: Lato, sans-serif; font-weight: 900; font-size: 52px; fill: #fff; stroke: #8e8e8e; stroke-width: 7; stroke-linejoin: round; }

/* Highlight cards */
.cards { margin-top: 48px; display: grid; grid-template-columns: repeat(3, 1fr); gap: 32px; }
.card {
  height: 206px;
  padding: 24px 24px 25px;
  display: flex;
  flex-direction: column;
  border-radius: 16px;
  background: #fff;
  box-shadow: 0 1px 3px rgba(0, 0, 0, .1), 0 1px 2px -1px rgba(0, 0, 0, .1);
}
h3 { font-size: 18px; line-height: 28px; font-weight: 600; }
.card p { margin-top: 30px; color: #737373; }
.card a { margin-top: auto; color: #171717; font-weight: 500; }
.arrow { font-family: "Liberation Sans", sans-serif; font-weight: 400; font-size: 15px; line-height: 1; }

.join-lead { width: 672px; margin: 24px auto 0; font-size: 20px; line-height: 28px; text-align: center; color: #737373; }

/* Developer tools badge */
.dev-badge {
  position: absolute;
  left: 20px;
  top: 2022px;
  width: 36px;
  height: 36px;
  border-radius: 50%;
  background: #2e2e2e;
  box-shadow: 0 0 0 1px #171717, inset 0 0 0 1px rgba(255, 255, 255, .2), 0 16px 32px -8px rgba(0, 0, 0, .24);
}
.dev-badge svg { display: block; width: 36px; height: 36px; }
```
